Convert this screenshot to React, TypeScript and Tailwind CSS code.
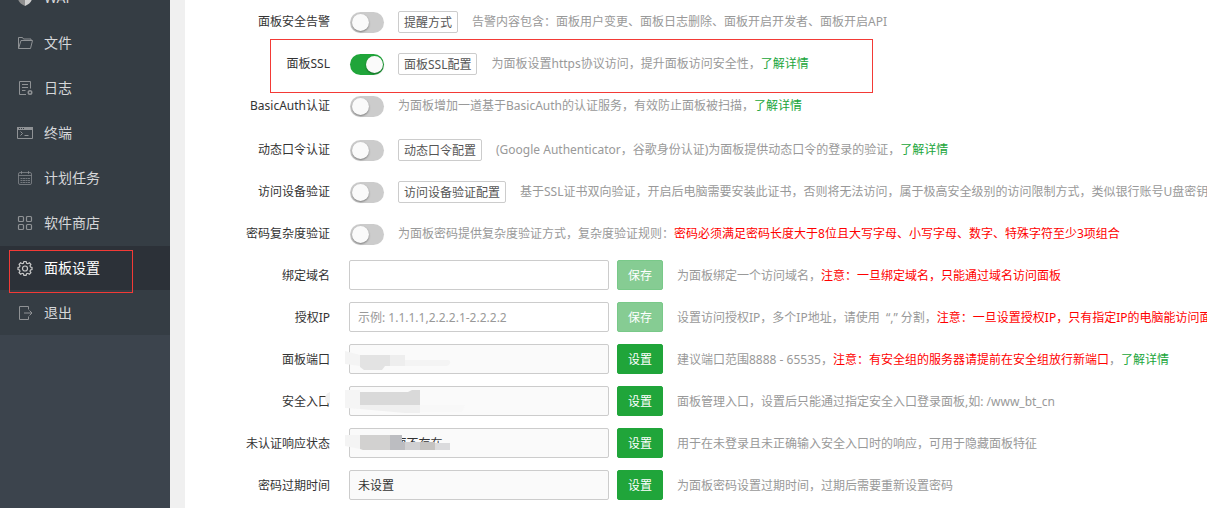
import { useState } from 'react'
import type { ReactNode } from 'react'

const iconProps = {
  viewBox: '0 0 16 16',
  fill: 'none',
  stroke: 'currentColor',
  strokeWidth: 1,
  className: 'size-4 shrink-0',
  'aria-hidden': true,
}

const WafIcon = () => (
  <svg {...iconProps} stroke="none">
    <path d="M8 1 1 3v5c0 4 3 6 7 8z" fill="#8f8f8f" />
    <path d="M8 1l7 2v5c0 4-3 6-7 8z" fill="#d0d0d0" />
  </svg>
)

const FolderIcon = () => (
  <svg {...iconProps}>
    <path d="M1.500 13.500v-11h4l1 1.500h7.500v2M1.500 13.500h12l2-8H4l-2.500 8" />
  </svg>
)

const LogIcon = () => (
  <svg {...iconProps}>
    <path d="M13.500 8.500v-7h-11v13H9M5 4.500h6M5 7.500h6M5 10.500h3.500" />
    <circle cx="13" cy="12.500" r="1.750" strokeWidth="1.500" />
  </svg>
)

const TerminalIcon = () => (
  <svg {...iconProps}>
    <path d="M.5 2.500h15v11H.5zM3.500 6.500l2 2-2 2M7.500 10.500h4" />
    <path d="M0 3.500h16" strokeWidth="3" />
    <path d="M2 3.500h5" stroke="#353d44" strokeDasharray="1 1" />
  </svg>
)

const CronIcon = () => (
  <svg {...iconProps} strokeOpacity="0.7">
    <rect x="1.500" y="2.500" width="13" height="12" rx="1.500" />
    <path d="M1.500 5.500h13M4.500 1v3M11.500 1v3" />
    <path d="M3.500 8.500h9.500M3.500 10.500h9.500M3.500 12.500h9.500" strokeDasharray="2 .5" />
  </svg>
)

const StoreIcon = () => (
  <svg {...iconProps} strokeWidth="1.200">
    <rect x="1.500" y="1.500" width="5" height="5" rx="1" />
    <rect x="9.500" y="1.500" width="5" height="5" rx="1" />
    <rect x="1.500" y="9.500" width="5" height="5" rx="1" />
    <rect x="9.500" y="9.500" width="5" height="5" rx="1" />
  </svg>
)

const GearIcon = () => (
  <svg {...iconProps} strokeWidth="1.200">
    <path d="M6.900 1.500h2.200l.5 1.700 1.200.5 1.600-.9 1.500 1.500-.9 1.600.5 1.200 1.500.4v2l-1.500.4-.5 1.200.9 1.600-1.500 1.500-1.600-.9-1.200.5-.5 1.500H6.900l-.5-1.500-1.200-.5-1.600.9-1.500-1.500.9-1.600-.5-1.200L1 9.500v-2l1.500-.4.5-1.200-.9-1.600 1.500-1.500 1.600.9 1.200-.5z" />
    <circle cx="8" cy="8.500" r="2.500" />
  </svg>
)

const ExitIcon = () => (
  <svg {...iconProps}>
    <path d="M11.500 4.500v-3h-9v13h9v-3M7 8h8M12.500 5.500 15 8l-2.500 2.500" />
  </svg>
)

const menu = [
  { title: 'WAF', icon: WafIcon },
  { title: '文件', icon: FolderIcon },
  { title: '日志', icon: LogIcon },
  { title: '终端', icon: TerminalIcon },
  { title: '计划任务', icon: CronIcon },
  { title: '软件商店', icon: StoreIcon },
  { title: '面板设置', icon: GearIcon, active: true },
  { title: '退出', icon: ExitIcon },
]

function Sidebar() {
  return (
    <aside className="w-[170px] shrink-0 bg-[#3c444d]">
      <nav className="-mt-6 flex flex-col gap-px bg-[#353d44]">
        {menu.map(({ title, icon: Icon, active }) => (
          <a
            key={title}
            href="#"
            className={
              active
                ? 'relative flex h-11 items-center gap-[11px] bg-[#2c3138] pl-[17px] text-sm text-white'
                : 'flex h-11 items-center gap-[11px] pl-[17px] text-sm text-[#d6d7d9]'
            }
          >
            <span className={active ? 'text-[#c8c8c8]' : 'text-[#8f9295]'}>
              <Icon />
            </span>
            {title}
            {active && (
              <span className="pointer-events-none absolute top-1 left-[9px] h-[43px] w-[124px] border border-[#f33a36]" />
            )}
          </a>
        ))}
      </nav>
    </aside>
  )
}

interface SwitchRowProps {
  id: string
  label: string
  config?: string
  defaultOn?: boolean
  marked?: boolean
  children: ReactNode
}

function SwitchRow({ id, label, config, defaultOn = false, marked, children }: SwitchRowProps) {
  const [on, setOn] = useState(defaultOn)

  return (
    <div className="relative flex h-[42px] items-center">
      <label htmlFor={id} className="w-[145px] shrink-0 text-right text-[#333]">
        {label}
      </label>
      <span className="relative mt-px ml-5 h-[21px] w-[34px] shrink-0">
        <input
          id={id}
          type="checkbox"
          checked={on}
          onChange={(e) => setOn(e.target.checked)}
          className="peer block h-[21px] w-[34px] appearance-none rounded-full bg-[#ccc] checked:bg-[#20a53a]"
        />
        <span className="pointer-events-none absolute top-0.5 left-0.5 size-[17px] rounded-full bg-[#fafafa] shadow-[0_1px_2px_rgba(0,0,0,0.4)] peer-checked:left-4" />
      </span>
      {config && (
        <button type="button" className="ml-3.5 h-[22px] shrink-0 rounded-xs border border-[#ccc] bg-white px-[5px] pt-px text-[#555]">
          {config}
        </button>
      )}
      <p className="ml-3.5 whitespace-nowrap text-[#999]">{children}</p>
      {marked && (
        <span className="pointer-events-none absolute -top-1 left-[85px] h-[54px] w-[603px] border border-[#f33a36]" />
      )}
    </div>
  )
}

interface FieldRowProps {
  id: string
  label: string
  value?: string
  placeholder?: string
  save?: boolean
  mask?: ReactNode
  children: ReactNode
}

function FieldRow({ id, label, value = '', placeholder, save, mask, children }: FieldRowProps) {
  return (
    <div className="flex h-[42px] items-center">
      <label htmlFor={id} className="w-[145px] shrink-0 pt-0.5 text-right text-[#333]">
        {label}
      </label>
      <span className="relative ml-[19px] w-[260px] shrink-0">
        <input
          id={id}
          type="text"
          defaultValue={value}
          placeholder={placeholder}
          readOnly={!save}
          className="block h-[30px] w-full rounded-xs border border-[#ccc] bg-white px-2 text-[#333] placeholder:text-[#999] read-only:bg-[#fafafa]"
        />
        {mask}
      </span>
      <button
        type="button"
        disabled={save}
        className="ml-2 h-[30px] w-[46px] shrink-0 rounded-xs border border-[#20a53a] bg-[#20a53a] pt-0.5 text-white disabled:border-[#79c989] disabled:bg-[#86cc93]"
      >
        {save ? '保存' : '设置'}
      </button>
      <p className="ml-3.5 pt-0.5 whitespace-nowrap text-[#999]">{children}</p>
    </div>
  )
}

const More = () => (
  <a href="#" className="text-[#20a53a]">
    了解详情
  </a>
)

const Warn = ({ children }: { children: ReactNode }) => <span className="text-[#f00]">{children}</span>

// Pixelated blocks that hide the private values
const maskClass = 'pointer-events-none absolute -top-px -left-5 h-[32px] w-[140px] overflow-visible'

const PortMask = () => (
  <svg viewBox="0 0 140 32" className={maskClass} aria-hidden="true">
    <path d="M16 8l15 4h45v5h42q4 0 3 3-1 3-4 3H31l-15-2z" fill="#f4f4f4" />
    <path d="M31 12h30v11h-5l-3 4H35l-4-3z" fill="#e3e3e3" />
    <path d="M61 12h15v11H61z" fill="#eeeeee" />
  </svg>
)

const EntryMask = () => (
  <svg viewBox="0 0 140 32" className={maskClass} aria-hidden="true">
    <path d="M1 7q-5 2-5 7 1 4 5 5z" fill="#f0f0f0" />
    <path d="M16 5h15v19l-15-1z" fill="#f5f5f5" />
    <path d="M31 20h105l-3 7H76l-45-4z" fill="#f8f8f8" />
    <path d="M31 20h60v8H76l-45-4z" fill="#f0f0f0" />
    <path d="M31 7h48l4-2h8v15H31z" fill="#d9d9d9" />
  </svg>
)

const StatusMask = () => (
  <svg viewBox="0 0 140 32" className={maskClass} aria-hidden="true">
    <path d="M16 8h15v14l-15-3z" fill="#f4f4f4" />
    <path d="M31 8h30v15H34l-3-1z" fill="#d2d1d0" />
    <path d="M61 8h12v7h3v8H61z" fill="#bcbdc1" />
    <path d="M76 15h15v8H76z" fill="#d0d0d2" />
    <path d="M91 15h15v8H91z" fill="#c5c3c1" />
    <path d="M106 16h15v7h-15z" fill="#dbdbdd" />
  </svg>
)

export default function App() {
  return (
    <div className="flex min-h-screen overflow-hidden bg-[#f0f0f0] font-['Noto_Sans','Noto_Sans_CJK_SC',sans-serif] text-xs">
      <Sidebar />
      <main className="ml-[15px] min-w-0 flex-1 overflow-hidden bg-white pt-px">
        <section>
          <SwitchRow id="alarm" label="面板安全告警" config="提醒方式">
            告警内容包含：面板用户变更、面板日志删除、面板开启开发者、面板开启API
          </SwitchRow>
          <SwitchRow id="ssl" label="面板SSL" config="面板SSL配置" defaultOn marked>
            为面板设置https协议访问，提升面板访问安全性，
            <More />
          </SwitchRow>
          <SwitchRow id="basic-auth" label="BasicAuth认证">
            为面板增加一道基于BasicAuth的认证服务，有效防止面板被扫描，
            <More />
          </SwitchRow>
        </section>
        <section className="pt-0.5">
          <SwitchRow id="otp" label="动态口令认证" config="动态口令配置">
            (Google Authenticator，谷歌身份认证)为面板提供动态口令的登录的验证，
            <More />
          </SwitchRow>
          <SwitchRow id="device" label="访问设备验证" config="访问设备验证配置">
            基于SSL证书双向验证，开启后电脑需要安装此证书，否则将无法访问，属于极高安全级别的访问限制方式，类似银行账号U盘密钥
          </SwitchRow>
          <SwitchRow id="complexity" label="密码复杂度验证">
            为面板密码提供复杂度验证方式，复杂度验证规则：
            <Warn>密码必须满足密码长度大于8位且大写字母、小写字母、数字、特殊字符至少3项组合</Warn>
          </SwitchRow>
        </section>
        <section className="-mt-px">
          <FieldRow id="domain" label="绑定域名" save>
            为面板绑定一个访问域名，<Warn>注意：一旦绑定域名，只能通过域名访问面板</Warn>
          </FieldRow>
          <FieldRow id="allow-ip" label="授权IP" placeholder="示例: 1.1.1.1,2.2.2.1-2.2.2.2" save>
            设置访问授权IP，多个IP地址，请使用&nbsp; “,” 分割，
            <Warn>注意：一旦设置授权IP，只有指定IP的电脑能访问面板</Warn>
          </FieldRow>
          <FieldRow id="port" label="面板端口" mask={<PortMask />}>
            建议端口范围8888 - 65535，<Warn>注意：有安全组的服务器请提前在安全组放行新端口</Warn>，
            <More />
          </FieldRow>
          <FieldRow id="entry" label="安全入口" mask={<EntryMask />}>
            面板管理入口，设置后只能通过指定安全入口登录面板,如: /www_bt_cn
          </FieldRow>
          <FieldRow id="status" label="未认证响应状态" value="404-页面不存在" mask={<StatusMask />}>
            用于在未登录且未正确输入安全入口时的响应，可用于隐藏面板特征
          </FieldRow>
          <FieldRow id="expire" label="密码过期时间" value="未设置">
            为面板密码设置过期时间，过期后需要重新设置密码
          </FieldRow>
        </section>
      </main>
    </div>
  )
}
